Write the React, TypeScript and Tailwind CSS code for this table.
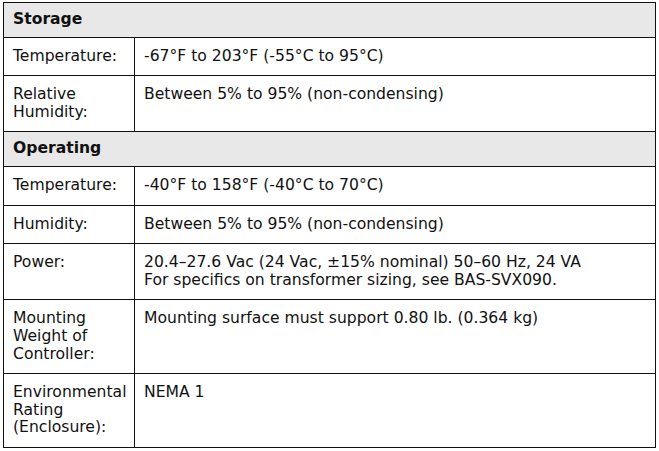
import React from "react";

type Row =
  | { kind: "header"; label: string }
  | { kind: "row"; label: string[]; value: string[] };

const rows: Row[] = [
  { kind: "header", label: "Storage" },
  { kind: "row", label: ["Temperature:"], value: ["-67°F to 203°F (-55°C to 95°C)"] },
  { kind: "row", label: ["Relative", "Humidity:"], value: ["Between 5% to 95% (non-condensing)"] },
  { kind: "header", label: "Operating" },
  { kind: "row", label: ["Temperature:"], value: ["-40°F to 158°F (-40°C to 70°C)"] },
  { kind: "row", label: ["Humidity:"], value: ["Between 5% to 95% (non-condensing)"] },
  {
    kind: "row",
    label: ["Power:"],
    value: [
      "20.4–27.6 Vac (24 Vac, ±15% nominal) 50–60 Hz, 24 VA",
      "For specifics on transformer sizing, see BAS-SVX090.",
    ],
  },
  {
    kind: "row",
    label: ["Mounting", "Weight of", "Controller:"],
    value: ["Mounting surface must support 0.80 lb. (0.364 kg)"],
  },
  {
    kind: "row",
    label: ["Environmental", "Rating", "(Enclosure):"],
    value: ["NEMA 1"],
  },
];

export default function App() {
  return (
    <div className="w-[659px] h-[451px] bg-white pl-[3px] pt-[2px]">
      <table
        className="w-[653px] table-fixed border-collapse text-[15.6px] leading-[17.6px] text-[#111]"
        style={{ fontFamily: '"DejaVu Sans", Verdana, sans-serif' }}
      >
        <colgroup>
          <col className="w-[131px]" />
          <col />
        </colgroup>
        <tbody>
          {rows.map((r, i) =>
            r.kind === "header" ? (
              <tr key={i}>
                <td
                  colSpan={2}
                  className="border border-[#111] bg-[#e8e8e8] px-[9px] pt-[8px] pb-[8px] font-bold"
                >
                  {r.label}
                </td>
              </tr>
            ) : (
              <tr key={i}>
                <td className="border border-[#111] pl-[9px] pr-0 pt-[10px] pb-[10px] align-top whitespace-nowrap overflow-hidden">
                  {r.label.map((l, j) => (
                    <div key={j}>{l}</div>
                  ))}
                </td>
                <td className="border border-[#111] px-[9px] pt-[10px] pb-[10px] align-top whitespace-nowrap">
                  {r.value.map((l, j) => (
                    <div key={j}>{l}</div>
                  ))}
                </td>
              </tr>
            )
          )}
        </tbody>
      </table>
    </div>
  );
}
